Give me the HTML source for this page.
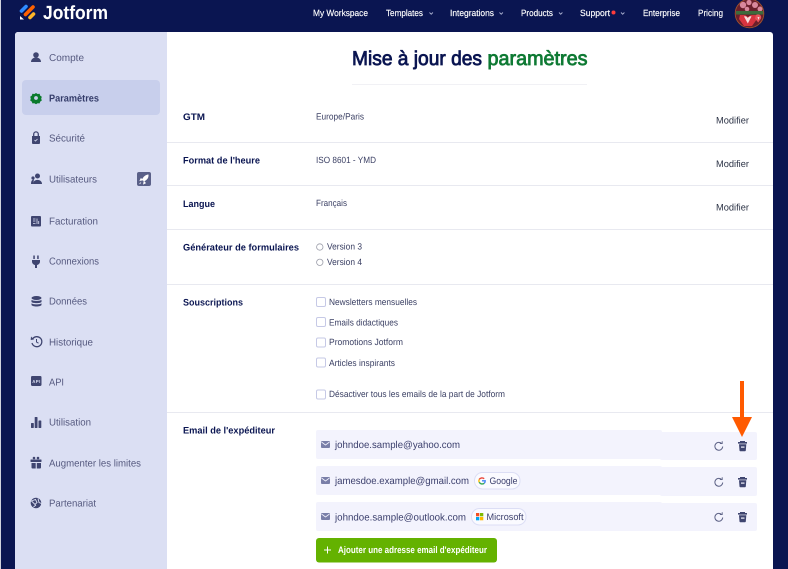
<!DOCTYPE html>
<html lang="fr"><head><meta charset="utf-8"><title>Jotform</title>
<style>
html,body{margin:0;padding:0;width:788px;height:569px;overflow:hidden;background:#0a1551}
svg{display:block;filter:blur(.3px)}
text{font-family:"Liberation Sans",sans-serif}
.n{fill:#fff;font-size:9px;stroke:#fff;stroke-width:.15px}
.s{fill:#55597f;font-size:10px}
.l{fill:#0a1551;font-size:9.5px;font-weight:bold}
.v{fill:#3a3f63;font-size:9px}
.m{fill:#2b3245;font-size:9.5px}
.e{fill:#3a3e6c;font-size:10px}
.i{fill:#3f4570}
.tr{fill:#3f4570}
.t1{fill:#0a1551;stroke:#0a1551;stroke-width:.8px;font-size:20px}
.t2{fill:#0f7a34;stroke:#0f7a34;stroke-width:.8px;font-size:20px}
</style></head><body>
<svg width="788" height="569" viewBox="0 0 788 569" xmlns="http://www.w3.org/2000/svg" text-rendering="geometricPrecision">
<defs><clipPath id="av"><circle cx="749.5" cy="13.5" r="14"/></clipPath></defs>
<rect width="788" height="569" fill="#0a1551"/>
<rect x="0" width="1" height="569" fill="#cfd1dd"/>
<!-- logo -->
<g fill="none" stroke-linecap="round">
<path d="M21.500 11 L26 6.500" stroke="#2f8cff" stroke-width="3.600"/>
<path d="M25.500 14.500 L33 7" stroke="#ff6100" stroke-width="3.600"/>
<path d="M30 17.500 L33.500 14" stroke="#ffb629" stroke-width="3.600"/>
</g>
<path d="M20 16 L20 19.500 L24 19.500 Z" fill="#fff"/>
<text x="43" y="19" fill="#fff" font-size="19" font-weight="bold" textLength="65" lengthAdjust="spacingAndGlyphs">Jotform</text>
<!-- nav -->
<text class="n" x="313" y="16" textLength="55" lengthAdjust="spacingAndGlyphs">My Workspace</text>
<text class="n" x="386" y="16" textLength="37" lengthAdjust="spacingAndGlyphs">Templates</text>
<text class="n" x="450" y="16" textLength="44" lengthAdjust="spacingAndGlyphs">Integrations</text>
<text class="n" x="521" y="16" textLength="32" lengthAdjust="spacingAndGlyphs">Products</text>
<text class="n" x="580" y="16" textLength="30" lengthAdjust="spacingAndGlyphs">Support</text>
<circle cx="613.500" cy="12.500" r="2" fill="#ff3b3b"/>
<text class="n" x="643" y="16" textLength="37" lengthAdjust="spacingAndGlyphs">Enterprise</text>
<text class="n" x="698" y="16" textLength="25" lengthAdjust="spacingAndGlyphs">Pricing</text>
<g fill="none" stroke="#aab0cf" stroke-width=".9">
<path d="M429.500 12.500l1.700 1.700 1.700-1.700"/><path d="M499.500 12.500l1.700 1.700 1.700-1.700"/><path d="M559 12.500l1.700 1.700 1.700-1.700"/><path d="M621 12.500l1.700 1.700 1.700-1.700"/>
</g>
<!-- avatar -->
<g clip-path="url(#av)">
<rect x="735" y="0" width="29" height="28" fill="#6a1f2b"/>
<g fill="#d9889c"><circle cx="743" cy="5" r="3.200"/><circle cx="749" cy="2.500" r="2.600"/><circle cx="755" cy="5" r="3"/><circle cx="760" cy="9" r="2.500"/><circle cx="747" cy="9" r="2.300"/></g>
<rect x="736" y="11" width="28" height="3.500" fill="#3e6b3c"/>
<path d="M740 15h5l3 2 3-2h5l1 4-5 7h-8l-5-7z" fill="#d8343f"/>
<path d="M744 16.500c2-.8 3 .5 3.800 1.500.8-1 2-2.300 3.700-1.500l-3.700 7z" fill="#f7dcdc"/>
<path d="M756 15c2.500-1.500 6 0 5 3.500l-2.800 4-3.200-4z" fill="#e9535c"/>
<path d="M757.500 17l2 0-1 3z" fill="#f7dcdc"/>
</g>
<circle cx="749.500" cy="13.500" r="14.300" fill="none" stroke="#a5522b" stroke-width=".9"/>
<!-- card -->
<path d="M18 32H770a3 3 0 0 1 3 3V569H15V35a3 3 0 0 1 3-3z" fill="#fff"/>
<path d="M18 32H167V569H15V35a3 3 0 0 1 3-3z" fill="#dbdff3"/>
<rect x="22" y="80" width="138" height="35" rx="4" fill="#c8cfec"/>
<!-- sidebar icons -->
<circle class="i" cx="36" cy="55" r="2.800"/><path class="i" d="M31 62c0-6 10-6 10 0z"/>
<path d="M36 93l1.600 1 2-.2.6 1.800 1.600 1.100-.6 1.900.6 1.900-1.600 1.100-.6 1.800-2-.2-1.600 1-1.600-1-2 .2-.6-1.800-1.600-1.100.6-1.900-.6-1.900 1.600-1.100.6-1.800 2 .2z" fill="#0a7a2c"/><circle cx="36" cy="98" r="1.900" fill="#c8cfec"/>
<path class="i" d="M32 136h8v7a1 1 0 0 1-1 1h-6a1 1 0 0 1-1-1z"/><path d="M33.700 136v-1.800a2.300 2.300 0 0 1 4.600 0v1.800" fill="none" stroke="#3f4570" stroke-width="1.300"/><path d="M34.500 140l1 1 2-2" stroke="#dbdff3" stroke-width=".8" fill="none"/>
<circle class="i" cx="37.500" cy="176" r="2.500"/><path class="i" d="M33 184c0-5.500 9-5.500 9 0z"/><circle class="i" cx="33" cy="178" r="1.600"/><path class="i" d="M31 184c0-3 1-4.500 3-4.500l-1 4.500z"/>
<rect class="i" x="31" y="216" width="10" height="10.500" rx="1"/><path d="M33 219h2.500M33 221h2.500M33 223.500h2.500M37 218.500v5.500M38.700 221v3" stroke="#dbdff3" stroke-width=".8"/>
<path class="i" d="M32 260h8v1.500c0 2-1.500 3.200-3 3.500v3h-2v-3c-1.500-.3-3-1.500-3-3.500z"/><rect class="i" x="33.300" y="255.500" width="1.500" height="3.500"/><rect class="i" x="37.200" y="255.500" width="1.500" height="3.500"/>
<g class="i"><ellipse cx="36.500" cy="298" rx="5" ry="2"/><path d="M31.500 299.800c1 1.500 9 1.500 10 0v2.200c-1 1.500-9 1.500-10 0zM31.500 303.300c1 1.500 9 1.500 10 0v1.700c-1 2-9 2-10 0z"/></g>
<path d="M32.600 339a5 5 0 1 1-.6 4" fill="none" stroke="#3f4570" stroke-width="1.300"/><path d="M36.500 339v3l2 1.200" fill="none" stroke="#3f4570" stroke-width="1"/><path class="i" d="M31 336.500l3 3-3.300.5z"/>
<rect class="i" x="31" y="376" width="10.500" height="10" rx="1.200"/><text x="32.300" y="383" fill="#dbdff3" font-size="4.400" font-weight="bold" textLength="8">API</text>
<g class="i"><rect x="31" y="423" width="2.800" height="5" rx=".6"/><rect x="34.700" y="417" width="2.800" height="11" rx=".6"/><rect x="38.500" y="420.500" width="2.800" height="7.500" rx=".6"/></g>
<g class="i"><rect x="30.500" y="459.500" width="11" height="2.500" rx=".5"/><path d="M31.500 463h4.200v5.500h-3.200a1 1 0 0 1-1-1zM36.800 463h4.200v4.500a1 1 0 0 1-1 1h-3.200z"/><circle cx="34" cy="458" r="1.300"/><circle cx="38" cy="458" r="1.300"/></g>
<circle class="i" cx="36" cy="503" r="5.300"/><path d="M31.500 501l4-1.500 1.500 3-2 2zM38 498.500l1 4 2.500 1M33.500 507l2.500-2" stroke="#dbdff3" stroke-width=".9" fill="none"/>
<!-- sidebar text -->
<text class="s" x="49" y="61" textLength="35" lengthAdjust="spacingAndGlyphs">Compte</text>
<text x="49" y="101.500" fill="#343c6a" font-size="10" font-weight="bold" textLength="50" lengthAdjust="spacingAndGlyphs">Paramètres</text>
<text class="s" x="49" y="141.500" textLength="36" lengthAdjust="spacingAndGlyphs">Sécurité</text>
<text class="s" x="49" y="182.500" textLength="48" lengthAdjust="spacingAndGlyphs">Utilisateurs</text>
<text class="s" x="49" y="224.500" textLength="49" lengthAdjust="spacingAndGlyphs">Facturation</text>
<text class="s" x="49" y="264.500" textLength="50" lengthAdjust="spacingAndGlyphs">Connexions</text>
<text class="s" x="49" y="304.500" textLength="38" lengthAdjust="spacingAndGlyphs">Données</text>
<text class="s" x="49" y="345.500" textLength="44" lengthAdjust="spacingAndGlyphs">Historique</text>
<text class="s" x="49" y="385.500" textLength="15" lengthAdjust="spacingAndGlyphs">API</text>
<text class="s" x="49" y="425.500" textLength="42" lengthAdjust="spacingAndGlyphs">Utilisation</text>
<text class="s" x="49" y="466.500" textLength="92" lengthAdjust="spacingAndGlyphs">Augmenter les limites</text>
<text class="s" x="49" y="506.500" textLength="47" lengthAdjust="spacingAndGlyphs">Partenariat</text>
<!-- rocket -->
<rect x="137" y="172" width="14" height="14" rx="2" fill="#5a6088"/>
<path d="M148.500 174.500c-3 .2-5 2-6.500 5l2 2c3-1.500 4.800-3.500 4.500-7z" fill="#fff"/><path d="M141 182.500l-1.500 1.500M142.500 180l-2.500.5 1-2zM144 181.500l-.5 2.500 2-1z" stroke="#fff" stroke-width=".7" fill="#fff"/>
<!-- title -->
<text class="t1" x="352" y="65" textLength="130" lengthAdjust="spacingAndGlyphs">Mise à jour des</text>
<text class="t2" x="487.500" y="65" textLength="100" lengthAdjust="spacingAndGlyphs">paramètres</text>
<rect x="352" y="84" width="235" height="1" fill="#f1f1f5"/>
<!-- dividers -->
<g fill="#e8e9f0"><rect x="167" y="142" width="606" height="1"/><rect x="167" y="185" width="606" height="1"/><rect x="167" y="229" width="606" height="1"/><rect x="167" y="284" width="606" height="1"/><rect x="167" y="412" width="606" height="1"/></g>
<!-- labels -->
<text class="l" x="183" y="120" textLength="22" lengthAdjust="spacingAndGlyphs">GTM</text>
<text class="l" x="183" y="163.500" textLength="77" lengthAdjust="spacingAndGlyphs">Format de l'heure</text>
<text class="l" x="183" y="207" textLength="32" lengthAdjust="spacingAndGlyphs">Langue</text>
<text class="l" x="183" y="250.500" textLength="116" lengthAdjust="spacingAndGlyphs">Générateur de formulaires</text>
<text class="l" x="183" y="305.500" textLength="60" lengthAdjust="spacingAndGlyphs">Souscriptions</text>
<text class="l" x="183" y="433.500" textLength="92" lengthAdjust="spacingAndGlyphs">Email de l'expéditeur</text>
<!-- values -->
<text class="v" x="316" y="119.500" textLength="48" lengthAdjust="spacingAndGlyphs">Europe/Paris</text>
<text class="v" x="316" y="163" textLength="60" lengthAdjust="spacingAndGlyphs">ISO 8601 - YMD</text>
<text class="v" x="316" y="206" textLength="31" lengthAdjust="spacingAndGlyphs">Français</text>
<text class="m" x="716" y="123.500" textLength="33" lengthAdjust="spacingAndGlyphs">Modifier</text>
<text class="m" x="716" y="167" textLength="33" lengthAdjust="spacingAndGlyphs">Modifier</text>
<text class="m" x="716" y="210.500" textLength="33" lengthAdjust="spacingAndGlyphs">Modifier</text>
<!-- radios -->
<g fill="#fff" stroke="#9a9ca8" stroke-width=".8"><circle cx="319.800" cy="247" r="3.200"/><circle cx="319.800" cy="262.300" r="3.200"/></g>
<text class="v" x="327" y="249.500" textLength="35" lengthAdjust="spacingAndGlyphs">Version 3</text>
<text class="v" x="327" y="265" textLength="35" lengthAdjust="spacingAndGlyphs">Version 4</text>
<!-- checkboxes -->
<g fill="#fff" stroke="#c6c9e6" stroke-width="1"><rect x="316.500" y="297.500" width="9" height="9" rx="1.500"/><rect x="316.500" y="317.500" width="9" height="9" rx="1.500"/><rect x="316.500" y="338" width="9" height="9" rx="1.500"/><rect x="316.500" y="358" width="9" height="9" rx="1.500"/><rect x="316.500" y="390" width="9" height="9" rx="1.500"/></g>
<text class="v" x="329" y="305" textLength="88" lengthAdjust="spacingAndGlyphs">Newsletters mensuelles</text>
<text class="v" x="329" y="325.500" textLength="69" lengthAdjust="spacingAndGlyphs">Emails didactiques</text>
<text class="v" x="329" y="345" textLength="74" lengthAdjust="spacingAndGlyphs">Promotions Jotform</text>
<text class="v" x="329" y="366" textLength="66" lengthAdjust="spacingAndGlyphs">Articles inspirants</text>
<text class="v" x="329" y="397" textLength="176" lengthAdjust="spacingAndGlyphs">Désactiver tous les emails de la part de Jotform</text>
<!-- email rows -->
<g fill="#f3f3fd">
<rect x="316" y="430" width="346" height="29" rx="2"/><rect x="660" y="432" width="97" height="28" rx="2"/>
<rect x="316" y="466" width="346" height="29" rx="2"/><rect x="660" y="467" width="97" height="29" rx="2"/>
<rect x="316" y="502" width="346" height="29" rx="2"/><rect x="660" y="503" width="97" height="28" rx="2"/>
</g>
<g fill="#7a7fa8">
<rect x="321" y="441" width="9" height="7" rx="1"/><rect x="321" y="477" width="9" height="7" rx="1"/><rect x="321" y="513" width="9" height="7" rx="1"/>
</g>
<g fill="none" stroke="#f3f3fd" stroke-width=".8"><path d="M321.500 442l4 3 4-3"/><path d="M321.500 478l4 3 4-3"/><path d="M321.500 514l4 3 4-3"/></g>
<text class="e" x="335" y="448" textLength="125" lengthAdjust="spacingAndGlyphs">johndoe.sample@yahoo.com</text>
<text class="e" x="335" y="484" textLength="134" lengthAdjust="spacingAndGlyphs">jamesdoe.example@gmail.com</text>
<text class="e" x="335" y="520.500" textLength="131" lengthAdjust="spacingAndGlyphs">johndoe.sample@outlook.com</text>
<!-- google pill -->
<rect x="474.500" y="472.500" width="45.500" height="16.500" rx="8" fill="#fafaff" stroke="#dcdef5"/>
<g fill="none" stroke-width="1.400"><path d="M484.200 478.700a3.400 3.400 0 0 0-5 .7" stroke="#ea4335"/><path d="M479.200 479.400a3.400 3.400 0 0 0 0 2.800" stroke="#fbbc05"/><path d="M479.200 482.200a3.400 3.400 0 0 0 5 1.100" stroke="#34a853"/><path d="M484.200 483.300a3.400 3.400 0 0 0 1-2.500h-3.200" stroke="#4285f4"/></g>
<text class="e" x="489.500" y="484" textLength="28" lengthAdjust="spacingAndGlyphs" style="font-size:9.500px">Google</text>
<!-- microsoft pill -->
<rect x="471.500" y="508.500" width="54.500" height="16.500" rx="8" fill="#fafaff" stroke="#dcdef5"/>
<rect x="476" y="513" width="3.300" height="3.300" fill="#f25022"/><rect x="480" y="513" width="3.300" height="3.300" fill="#7fba00"/><rect x="476" y="517" width="3.300" height="3.300" fill="#00a4ef"/><rect x="480" y="517" width="3.300" height="3.300" fill="#ffb900"/>
<text class="e" x="486.500" y="520" textLength="37" lengthAdjust="spacingAndGlyphs" style="font-size:9.500px">Microsoft</text>
<!-- reload -->
<g fill="none" stroke="#5f6488" stroke-width="1"><path d="M721.800 443.800a3.900 3.900 0 1 0 .9 2.700"/><path d="M719.800 443.500h2.400v-2.200" stroke-width=".9"/></g>
<g fill="none" stroke="#5f6488" stroke-width="1"><path d="M721.800 479.800a3.900 3.900 0 1 0 .9 2.700"/><path d="M719.800 479.500h2.400v-2.200" stroke-width=".9"/></g>
<g fill="none" stroke="#5f6488" stroke-width="1"><path d="M721.800 514.800a3.900 3.900 0 1 0 .9 2.700"/><path d="M719.800 514.500h2.400v-2.200" stroke-width=".9"/></g>
<!-- trash -->
<g class="tr">
<path d="M740 441h5v1h2v1.600h-9v-1.600h2z"/><path d="M739 444.200h7.300l-.5 6.300a.8.8 0 0 1-.8.7h-4.700a.8.8 0 0 1-.8-.7z"/>
<path d="M740 477h5v1h2v1.600h-9v-1.600h2z"/><path d="M739 480.200h7.300l-.5 6.300a.8.8 0 0 1-.8.7h-4.700a.8.8 0 0 1-.8-.7z"/>
<path d="M740 512h5v1h2v1.600h-9v-1.600h2z"/><path d="M739 515.200h7.300l-.5 6.300a.8.8 0 0 1-.8.7h-4.700a.8.8 0 0 1-.8-.7z"/>
</g>
<g fill="#f3f3fd"><rect x="741" y="446.500" width="3.500" height="1.200"/><rect x="741" y="482.500" width="3.500" height="1.200"/><rect x="741" y="517.500" width="3.500" height="1.200"/></g>
<!-- arrow -->
<rect x="740" y="381" width="4" height="37" fill="#ff5a00"/>
<path d="M732 417H752L742 437Z" fill="#ff5a00"/>
<!-- button -->
<rect x="316" y="538" width="181" height="24.500" rx="3" fill="#64b200"/>
<path d="M327.500 546.500v7M324 550h7" stroke="#fff" stroke-width="1"/>
<text x="338" y="553" fill="#fff" font-size="9.500" font-weight="bold" textLength="149" lengthAdjust="spacingAndGlyphs">Ajouter une adresse email d'expéditeur</text>
</svg>
</body></html>
